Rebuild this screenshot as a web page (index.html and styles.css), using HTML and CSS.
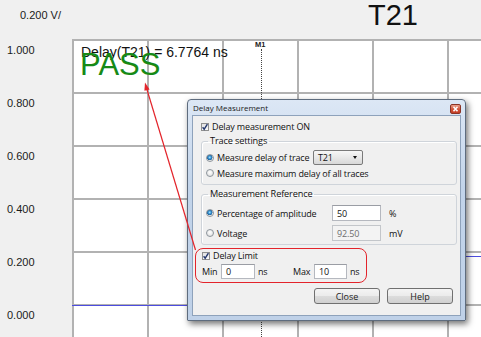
FILE: index.html
```html
<!DOCTYPE html>
<html lang="en">
<head>
    <meta charset="UTF-8">
    <meta name="viewport" content="width=device-width, initial-scale=1.0">
    <title>Delay Measurement</title>
    <link rel="stylesheet" href="styles.css">
</head>
<body>
    <div class="scope">
        <div class="topbar">
            <span class="scale">0.200 V/</span>
            <span class="trace-title">T21</span>
        </div>
        <div class="main">
            <div class="axis">
                <div class="tick">1.000</div>
                <div class="tick">0.800</div>
                <div class="tick">0.600</div>
                <div class="tick">0.400</div>
                <div class="tick">0.200</div>
                <div class="tick">0.000</div>
            </div>
            <div class="plot">
                <div class="readout">Delay(T21) = 6.7764 ns</div>
                <div class="verdict">PASS</div>
                <!-- marker and trace sit on the plot canvas -->
                <div class="marker"><span class="marker-name">M1</span></div>
                <div class="trace trace-low"></div>
                <div class="trace trace-high"></div>
            </div>
        </div>

        <div class="dialog">
            <div class="titlebar">
                <span class="title">Delay Measurement</span>
                <span class="close-btn">
                    <svg width="9" height="8" viewBox="0 0 9 8"><path d="M2.5 1.8 L6.5 6.2 M6.5 1.8 L2.5 6.2" stroke="#fff" stroke-width="1.5"/></svg>
                </span>
            </div>
            <div class="client">
                <div class="check-row main-check">
                    <span class="check"><svg width="8" height="8" viewBox="0 0 8 8"><path d="M1.6 4.2 L3.2 6.2 L6.4 1.2" fill="none" stroke="#24386e" stroke-width="1.4"/></svg></span>
                    Delay measurement ON
                </div>
                <fieldset class="group group-trace">
                    <legend>Trace settings</legend>
                    <div class="trace-row">
                        <span class="opt"><span class="radio on"></span>Measure delay of trace</span>
                        <span class="combo">T21<span class="combo-arrow"></span></span>
                    </div>
                    <div class="opt-row">
                        <span class="opt"><span class="radio"></span>Measure maximum delay of all traces</span>
                    </div>
                </fieldset>
                <fieldset class="group group-ref">
                    <legend>Measurement Reference</legend>
                    <div class="ref-row">
                        <span class="opt"><span class="radio on"></span>Percentage of amplitude</span>
                        <span class="field">50</span>
                        <span class="unit">%</span>
                    </div>
                    <div class="ref-row">
                        <span class="opt"><span class="radio"></span>Voltage</span>
                        <span class="field disabled">92.50</span>
                        <span class="unit">mV</span>
                    </div>
                </fieldset>
                <div class="limit">
                    <div class="check-row">
                        <span class="check"><svg width="8" height="8" viewBox="0 0 8 8"><path d="M1.6 4.2 L3.2 6.2 L6.4 1.2" fill="none" stroke="#24386e" stroke-width="1.4"/></svg></span>
                        Delay Limit
                    </div>
                    <div class="limit-row">
                        <span>Min</span>
                        <span class="field small">0</span>
                        <span class="unit">ns</span>
                        <span>Max</span>
                        <span class="field small">10</span>
                        <span class="unit">ns</span>
                    </div>
                </div>
                <div class="buttons">
                    <button class="btn">Close</button>
                    <button class="btn">Help</button>
                </div>
            </div>
        </div>

        <!-- red callout from the limit box to the verdict -->
        <svg class="callout" width="481" height="337" viewBox="0 0 481 337">
            <line x1="195.5" y1="250" x2="146.5" y2="88" stroke="#e3242b" stroke-width="1.2"/>
            <polygon points="145,82.5 149.6,89.4 144.4,90.8" fill="#e3242b"/>
        </svg>
    </div>
</body>
</html>
```

FILE: styles.css
```css
body {
    margin: 0;
    padding: 0;
    background-color: #f0f0f0;
    font-family: "Liberation Sans", Arial, sans-serif;
    color: #1a1a1a;
}
.scope {
    position: relative;
    width: 481px;
    height: 337px;
    overflow: hidden;
}
.topbar {
    height: 39px;
    display: flex;
    align-items: flex-start;
    background-color: #f0f0f0;
}
.scale {
    margin-left: 20px;
    line-height: 30px;
    font-size: 11px;
}
.trace-title {
    margin-left: auto;
    margin-right: 63px;
    line-height: 30px;
    font-size: 29px;
    color: #111;
}
.main {
    display: flex;
    height: 298px;
}
.axis {
    width: 72px;
    background-color: #f0f0f0;
}
.tick {
    height: 53px;
    line-height: 22px;
    padding-left: 7px;
    font-size: 11px;
}
.plot {
    flex: 1;
    position: relative;
    background-color: #fff;
    background-image:
        linear-gradient(to right, #b2b2b2 0, #b2b2b2 2px, transparent 2px),
        linear-gradient(to bottom, #b2b2b2 0, #b2b2b2 2px, transparent 2px);
    background-size: 75px 100%, 100% 53px;
}
.readout {
    padding: 5px 0 0 9px;
    line-height: 16px;
    font-size: 14px;
    color: #111;
}
.verdict {
    position: relative;
    margin-top: -11px;
    padding-left: 8px;
    line-height: 31px;
    font-size: 31px;
    color: #168a16;
}
.marker {
    position: absolute;
    left: 189px;
    top: 10px;
    bottom: 0;
    border-left: 1px dotted #444;
}
.marker-name {
    position: absolute;
    left: -7px;
    top: -9px;
    font-size: 7.5px;
    font-weight: bold;
    color: #222;
}
.trace {
    position: absolute;
    height: 1px;
    background-color: #4d4ddf;
}
.trace-low {
    left: 0;
    width: 260px;
    top: 266px;
}
.trace-high {
    left: 260px;
    right: 0;
    top: 217px;
}

/* dialog window */
.dialog {
    position: absolute;
    left: 187px;
    top: 99px;
    width: 279px;
    height: 222px;
    box-sizing: border-box;
    display: flex;
    flex-direction: column;
    padding: 0 4px 4px 4px;
    border: 1px solid #5e6c7e;
    border-radius: 4px 4px 1px 1px;
    background: linear-gradient(#dce7f5, #c2d4ea 40%, #bfd1e8);
    box-shadow: 2px 3px 6px rgba(0, 0, 0, 0.55);
    font-family: "Open Sans", "Liberation Sans", sans-serif;
    font-size: 9px;
    letter-spacing: -0.15px;
    color: #111;
}
.titlebar {
    height: 15px;
    display: flex;
    align-items: center;
    justify-content: space-between;
    padding-left: 1px;
}
.title {
    font-size: 8px;
    letter-spacing: 0;
    color: #1b1b1b;
}
.close-btn {
    width: 11px;
    height: 10px;
    box-sizing: border-box;
    margin-top: 2px;
    display: flex;
    align-items: center;
    justify-content: center;
    border: 1px solid #8a3325;
    border-radius: 2px;
    background: linear-gradient(#eba08c, #d3563d 50%, #c43c24);
}
.client {
    flex: 1;
    background-color: #f0f0f0;
    border: 1px solid #8ea2bb;
}
.check-row {
    display: flex;
    align-items: center;
    gap: 3px;
    height: 11px;
    line-height: 11px;
}
.main-check {
    margin: 5px 0 0 8px;
}
.check {
    width: 8px;
    height: 8px;
    box-sizing: border-box;
    display: flex;
    align-items: center;
    justify-content: center;
    border: 1px solid #8e8f8f;
    background: linear-gradient(#e2e2e2, #fbfbfb);
}
.check svg {
    flex-shrink: 0;
}
.group {
    margin: 3px 3px 0 8px;
    padding: 3px 4px 5px 4px;
    border: 1px solid #cfd4da;
    border-radius: 3px;
    box-shadow: inset 1px 1px 0 #fff;
}
.group legend {
    margin-left: 2px;
    padding: 0 2px;
    line-height: 12px;
    font-size: 9.2px;
}
.group-ref {
    padding: 5px 4px 3px 4px;
}
.opt {
    display: flex;
    align-items: center;
    gap: 3px;
}
.radio {
    width: 8px;
    height: 8px;
    box-sizing: border-box;
    border: 1px solid #8d959c;
    border-radius: 50%;
    background: radial-gradient(circle at 50% 40%, #fff, #dadada);
}
.radio.on {
    background: radial-gradient(circle at 45% 40%, #b6e6fb 0, #3d9bd8 1.3px, #1d5f9a 2.6px, #e9e9e9 3px, #fbfbfb 100%);
}
.trace-row {
    display: grid;
    grid-template-columns: 107px 50px;
    align-items: center;
    height: 15px;
}
.opt-row {
    display: flex;
    align-items: center;
    height: 12px;
    margin-top: 2px;
}
.combo {
    position: relative;
    height: 15px;
    box-sizing: border-box;
    padding-left: 4px;
    line-height: 13px;
    border: 1px solid #7a7a7a;
    border-radius: 2px;
    background: linear-gradient(#f7f7f7, #e8e8e8 50%, #d8d8d8);
}
.combo-arrow {
    position: absolute;
    right: 5px;
    top: 5px;
    border-left: 2.5px solid transparent;
    border-right: 2.5px solid transparent;
    border-top: 3px solid #111;
}
.ref-row {
    display: grid;
    grid-template-columns: 126px 49px auto;
    align-items: center;
    height: 16px;
}
.ref-row + .ref-row {
    margin-top: 4px;
}
.field {
    height: 16px;
    box-sizing: border-box;
    padding-left: 4px;
    line-height: 15px;
    border: 1px solid #b5b8bf;
    border-top-color: #9a9da4;
    background-color: #fff;
}
.field.disabled {
    color: #6d6d6d;
    background-color: #f3f3f3;
    border-color: #c3c6ca;
}
.field.small {
    height: 15px;
    line-height: 14px;
}
.unit {
    padding-left: 8px;
}
.limit {
    width: 172px;
    height: 35px;
    box-sizing: border-box;
    margin: 3px 0 0 2px;
    padding: 1px 0 0 6px;
    border: 1px solid #e3242b;
    border-radius: 8px;
}
.limit-row {
    display: grid;
    grid-template-columns: 19px 34px 38px 21px 33px auto;
    align-items: center;
    height: 15px;
    margin-top: 3px;
}
.limit-row .unit {
    padding-left: 3px;
}
.buttons {
    display: flex;
    justify-content: flex-end;
    gap: 7px;
    margin-top: 5px;
    padding-right: 7px;
}
.btn {
    width: 66px;
    height: 16px;
    padding: 0;
    font-family: inherit;
    font-size: 9px;
    color: #1e1e1e;
    border: 1px solid #707070;
    border-radius: 3px;
    background: linear-gradient(#f4f4f4, #ebebeb 50%, #dcdcdc 51%, #d0d0d0);
}
.callout {
    position: absolute;
    left: 0;
    top: 0;
    pointer-events: none;
}
```
